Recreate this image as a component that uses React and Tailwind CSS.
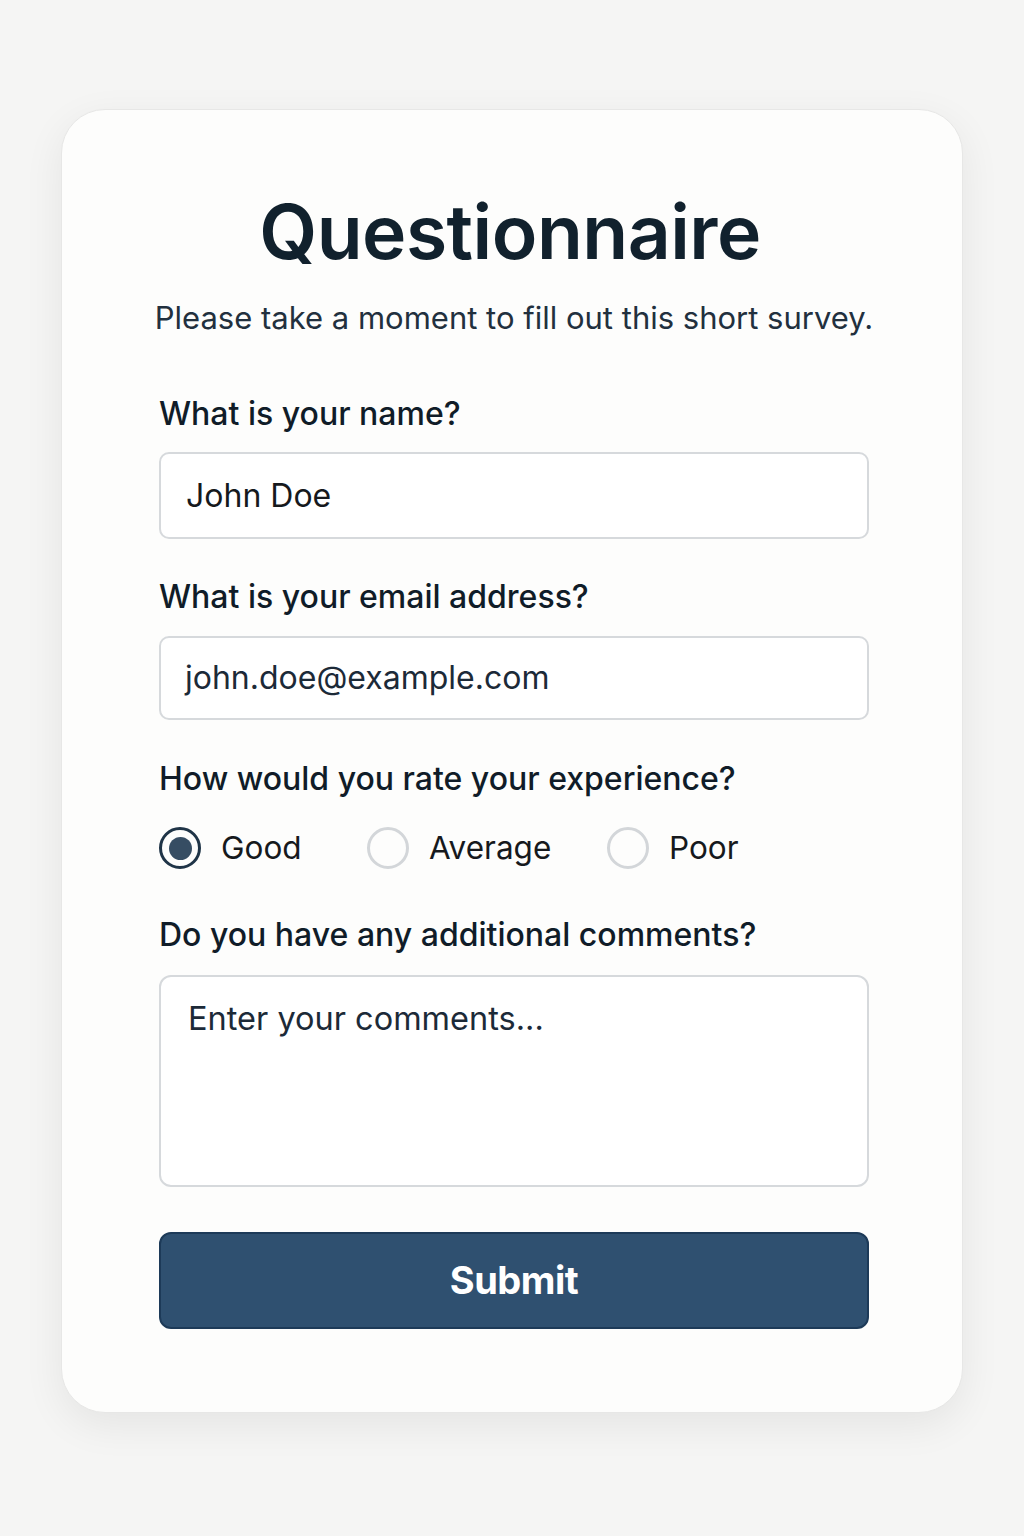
import { useState } from 'react';

const options = ['Good', 'Average', 'Poor'];

function Radio({ label, checked, onSelect, className }) {
  return (
    <label className={`flex items-center cursor-pointer ${className}`} onClick={onSelect}>
      <span
        className={`w-[42px] h-[42px] rounded-full flex items-center justify-center ${
          checked ? 'border-[3px] border-[#1f3447]' : 'border-[3px] border-[#d3d6d9]'
        }`}
      >
        {checked && <span className="w-[23px] h-[23px] rounded-full bg-[#364d63]" />}
      </span>
      <span className="ml-[20px] text-[31.5px] leading-[40px] text-[#16191d]">{label}</span>
    </label>
  );
}

export default function App() {
  const [rating, setRating] = useState('Good');

  return (
    <div className="min-h-[1536px] bg-[#f5f5f4] pt-[109px] font-['Inter',sans-serif]">
      <div className="mx-auto w-[902px] rounded-[44px] bg-[#fdfdfc] border border-[#e7e7e6] shadow-[0_12px_40px_rgba(0,0,0,0.07)] pt-[86px] pb-[83px] pl-[97px] pr-[93px]">
        {/* Header */}
        <h1 className="pr-[8px] text-center text-[75px] leading-[72px] font-semibold tracking-[-0.5px] text-[#11212d]">
          Questionnaire
        </h1>
        <p className="-mx-[30px] mt-[30px] whitespace-nowrap text-center text-[31px] leading-[40px] text-[#22303e]">
          Please take a moment to fill out this short survey.
        </p>

        {/* Name */}
        <label className="block mt-[56px] text-[32px] leading-[40px] font-medium text-[#101c28]">
          What is your name?
        </label>
        <div className="mt-[18px] h-[87px] rounded-[10px] border-2 border-[#d6d9dc] bg-white flex items-center px-[25px]">
          <span className="text-[32px] text-[#16191d]">John Doe</span>
        </div>

        {/* Email */}
        <label className="block mt-[38px] text-[32px] leading-[40px] font-medium text-[#101c28]">
          What is your email address?
        </label>
        <div className="mt-[19px] h-[84px] rounded-[10px] border-2 border-[#d6d9dc] bg-white flex items-center px-[24px]">
          <span className="text-[32px] text-[#1c2a38]">john.doe@example.com</span>
        </div>

        {/* Rating */}
        <label className="block mt-[39px] text-[32px] leading-[40px] font-medium text-[#101c28]">
          How would you rate your experience?
        </label>
        <div className="mt-[28px] flex items-center">
          {options.map((o, i) => (
            <Radio
              key={o}
              label={o}
              checked={rating === o}
              onSelect={() => setRating(o)}
              className={i === 0 ? 'w-[208px]' : i === 1 ? 'w-[240px]' : ''}
            />
          ))}
        </div>

        {/* Comments */}
        <label className="block mt-[46px] text-[32px] leading-[40px] font-medium text-[#101c28]">
          Do you have any additional comments?
        </label>
        <div className="mt-[20px] h-[212px] rounded-[12px] border-2 border-[#d6d9dc] bg-white px-[27px] pt-[22px]">
          <span className="text-[32.5px] leading-[40px] text-[#1c2a38]">Enter your comments...</span>
        </div>

        <button className="mt-[45px] w-full h-[97px] rounded-[12px] bg-[#2f5070] border-2 border-[#1d3a58] text-white text-[38px] font-bold tracking-[-0.5px]">
          Submit
        </button>
      </div>
    </div>
  );
}
